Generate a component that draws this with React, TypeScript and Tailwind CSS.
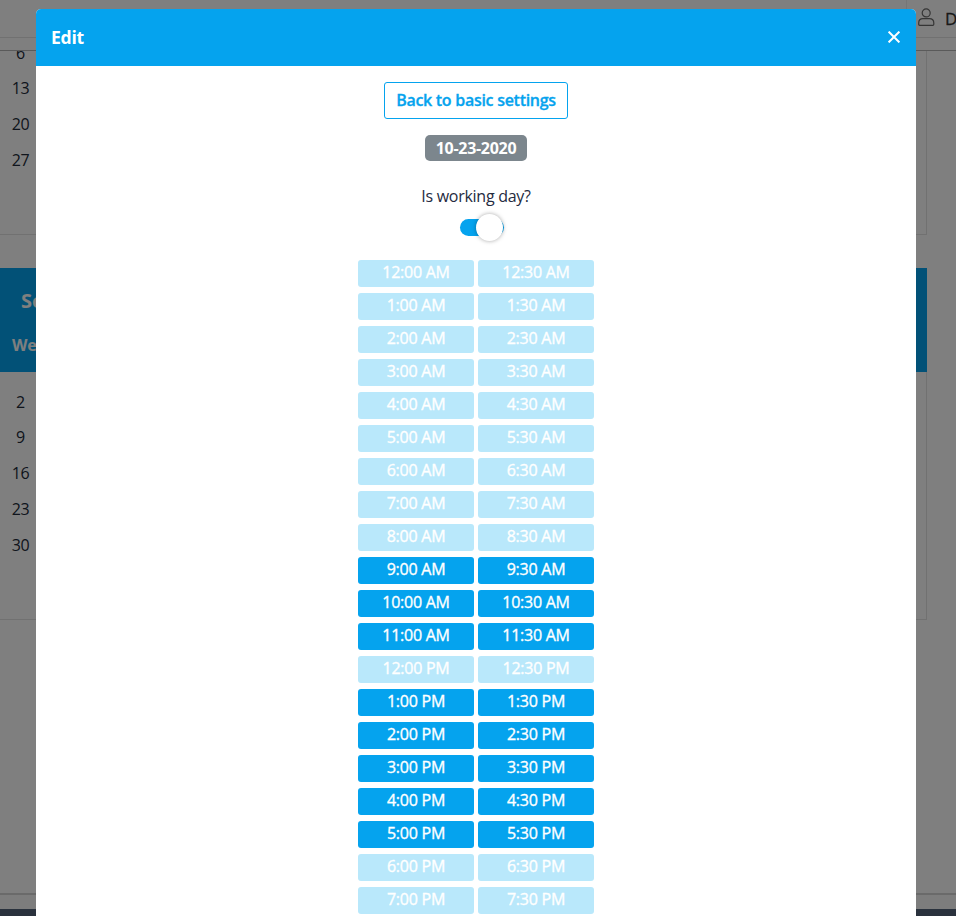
const HOURS = Array.from({ length: 20 }, (_, h) => h);

const isOpen = (h: number) => (h >= 9 && h < 12) || (h >= 13 && h < 18);

const label = (h: number, minutes: string) =>
  `${h % 12 === 0 ? 12 : h % 12}:${minutes} ${h < 12 ? 'AM' : 'PM'}`;

function Slot({ hour, minutes }: { hour: number; minutes: string }) {
  return (
    <button
      className={`h-[27px] w-[116px] rounded-[3px] pb-[2px] text-base leading-[25px] tracking-[-0.25px] text-white [-webkit-text-stroke:0.35px_currentColor] ${
        isOpen(hour) ? 'bg-[#05a3ee]' : 'bg-[#b9e8fb]'
      }`}
    >
      {label(hour, minutes)}
    </button>
  );
}

function Dates({ days }: { days: number[] }) {
  return (
    <div className="flex w-[41px] flex-col text-center text-base tracking-[-0.3px] text-[#212a38]">
      {days.map((d) => (
        <span key={d} className="h-[35.8px] leading-[36px]">
          {d}
        </span>
      ))}
    </div>
  );
}

function CalendarPage() {
  return (
    <div className="flex h-[916px] w-[956px] flex-col bg-white">
      <header className="flex h-[51px] shrink-0 flex-col items-end border-b border-[#b5b5b5]">
        <div className="flex h-[38px] w-full justify-end border-b border-[#e2e2e2]">
          <div className="flex w-[50px] items-start overflow-hidden border-l border-[#ececec] pt-2 pl-[11px]">
            <svg
              className="h-[19px] w-[17px] shrink-0"
              viewBox="0 0 17 19"
              fill="none"
              stroke="#6a6a6a"
              strokeWidth="1.2"
            >
              <circle cx="8.2" cy="4.9" r="4" />
              <path d="M5 10.6H11.4C14.3 10.6 15.8 12.6 15.8 15.1V16.3Q15.8 17.3 14.8 17.3H1.7Q.7 17.3 .7 16.3V15.1C.7 12.6 2.2 10.6 5 10.6Z" />
            </svg>
            <span className="ml-[10px] text-[17px] leading-[21px] text-[#333] [-webkit-text-stroke:0.3px_currentColor]">
              D
            </span>
          </div>
        </div>
      </header>
      <section className="flex h-[184px] w-[927px] shrink-0 overflow-hidden border-r border-b border-[#e2e2e2]">
        <div className="-mt-[16.5px]">
          <Dates days={[6, 13, 20, 27]} />
        </div>
      </section>
      <section className="mt-[33px] flex h-[352px] w-[927px] shrink-0 flex-col border-r border-b border-[#e2e2e2]">
        <div className="-mr-px h-[104px] bg-[#05a3ee] font-bold text-white">
          <div className="pt-[17px] pl-[21px] text-xl leading-8">September</div>
          <div className="pt-[16px] pl-3 text-base leading-6 tracking-[-0.2px]">Wed</div>
        </div>
        <div className="pt-[11.6px]">
          <Dates days={[2, 9, 16, 23, 30]} />
        </div>
      </section>
      <div className="mt-auto h-[16px] shrink-0 border-t-2 border-[#d5d5d5] bg-[#fafafa]" />
      <footer className="h-[7px] shrink-0 bg-[#55657b]" />
    </div>
  );
}

function EditDialog() {
  return (
    <div className="flex h-[907px] w-[880px] flex-col overflow-hidden rounded-t-[5px] bg-white">
      <div className="flex h-[57px] shrink-0 items-center justify-between bg-[#05a3ee] pr-4 pl-[15px] text-white">
        <h2 className="-mt-[2px] text-[17.6px] leading-6 font-bold tracking-[-0.3px]">Edit</h2>
        <button aria-label="Close" className="-mt-px">
          <svg className="h-3 w-3" viewBox="0 0 12 12" stroke="currentColor" strokeWidth="2">
            <path d="M.6.6 11.4 11.4M11.4.6.6 11.4" />
          </svg>
        </button>
      </div>
      <div className="flex flex-col items-center pt-4">
        <button className="h-[37px] w-[184px] rounded-[3px] border border-[#05a3ee] text-base leading-[35px] font-semibold tracking-[-0.28px] text-[#05a3ee] [-webkit-text-stroke:0.3px_currentColor]">
          Back to basic settings
        </button>
        <span className="mt-4 h-[26px] w-[102px] rounded-[5px] bg-[#7c868d] text-center text-base leading-[26px] font-bold tracking-[-0.3px] text-white">
          10-23-2020
        </span>
        <span className="mt-[23px] text-base leading-6 tracking-[-0.28px] text-[#252b40]">
          Is working day?
        </span>
        <div className="mt-[11px] ml-[12px] flex h-[17px] w-11 items-center justify-end rounded-full bg-[#05a3ee] pr-px">
          <div className="h-[27px] w-[27px] shrink-0 rounded-full bg-white shadow-[0_0_4px_rgba(0,0,0,0.35)]" />
        </div>
        <div className="mt-6 grid grid-cols-2 gap-x-1 gap-y-[6px]">
          {HOURS.map((h) => (
            <div key={h} className="contents">
              <Slot hour={h} minutes="00" />
              <Slot hour={h} minutes="30" />
            </div>
          ))}
        </div>
      </div>
    </div>
  );
}

export default function App() {
  return (
    <div className="relative h-[916px] w-[956px] overflow-hidden font-['Open_Sans','Noto_Sans',sans-serif]">
      <CalendarPage />
      <div className="absolute inset-0 flex items-start bg-black/50 pt-[9px] pl-9">
        <EditDialog />
      </div>
    </div>
  );
}
